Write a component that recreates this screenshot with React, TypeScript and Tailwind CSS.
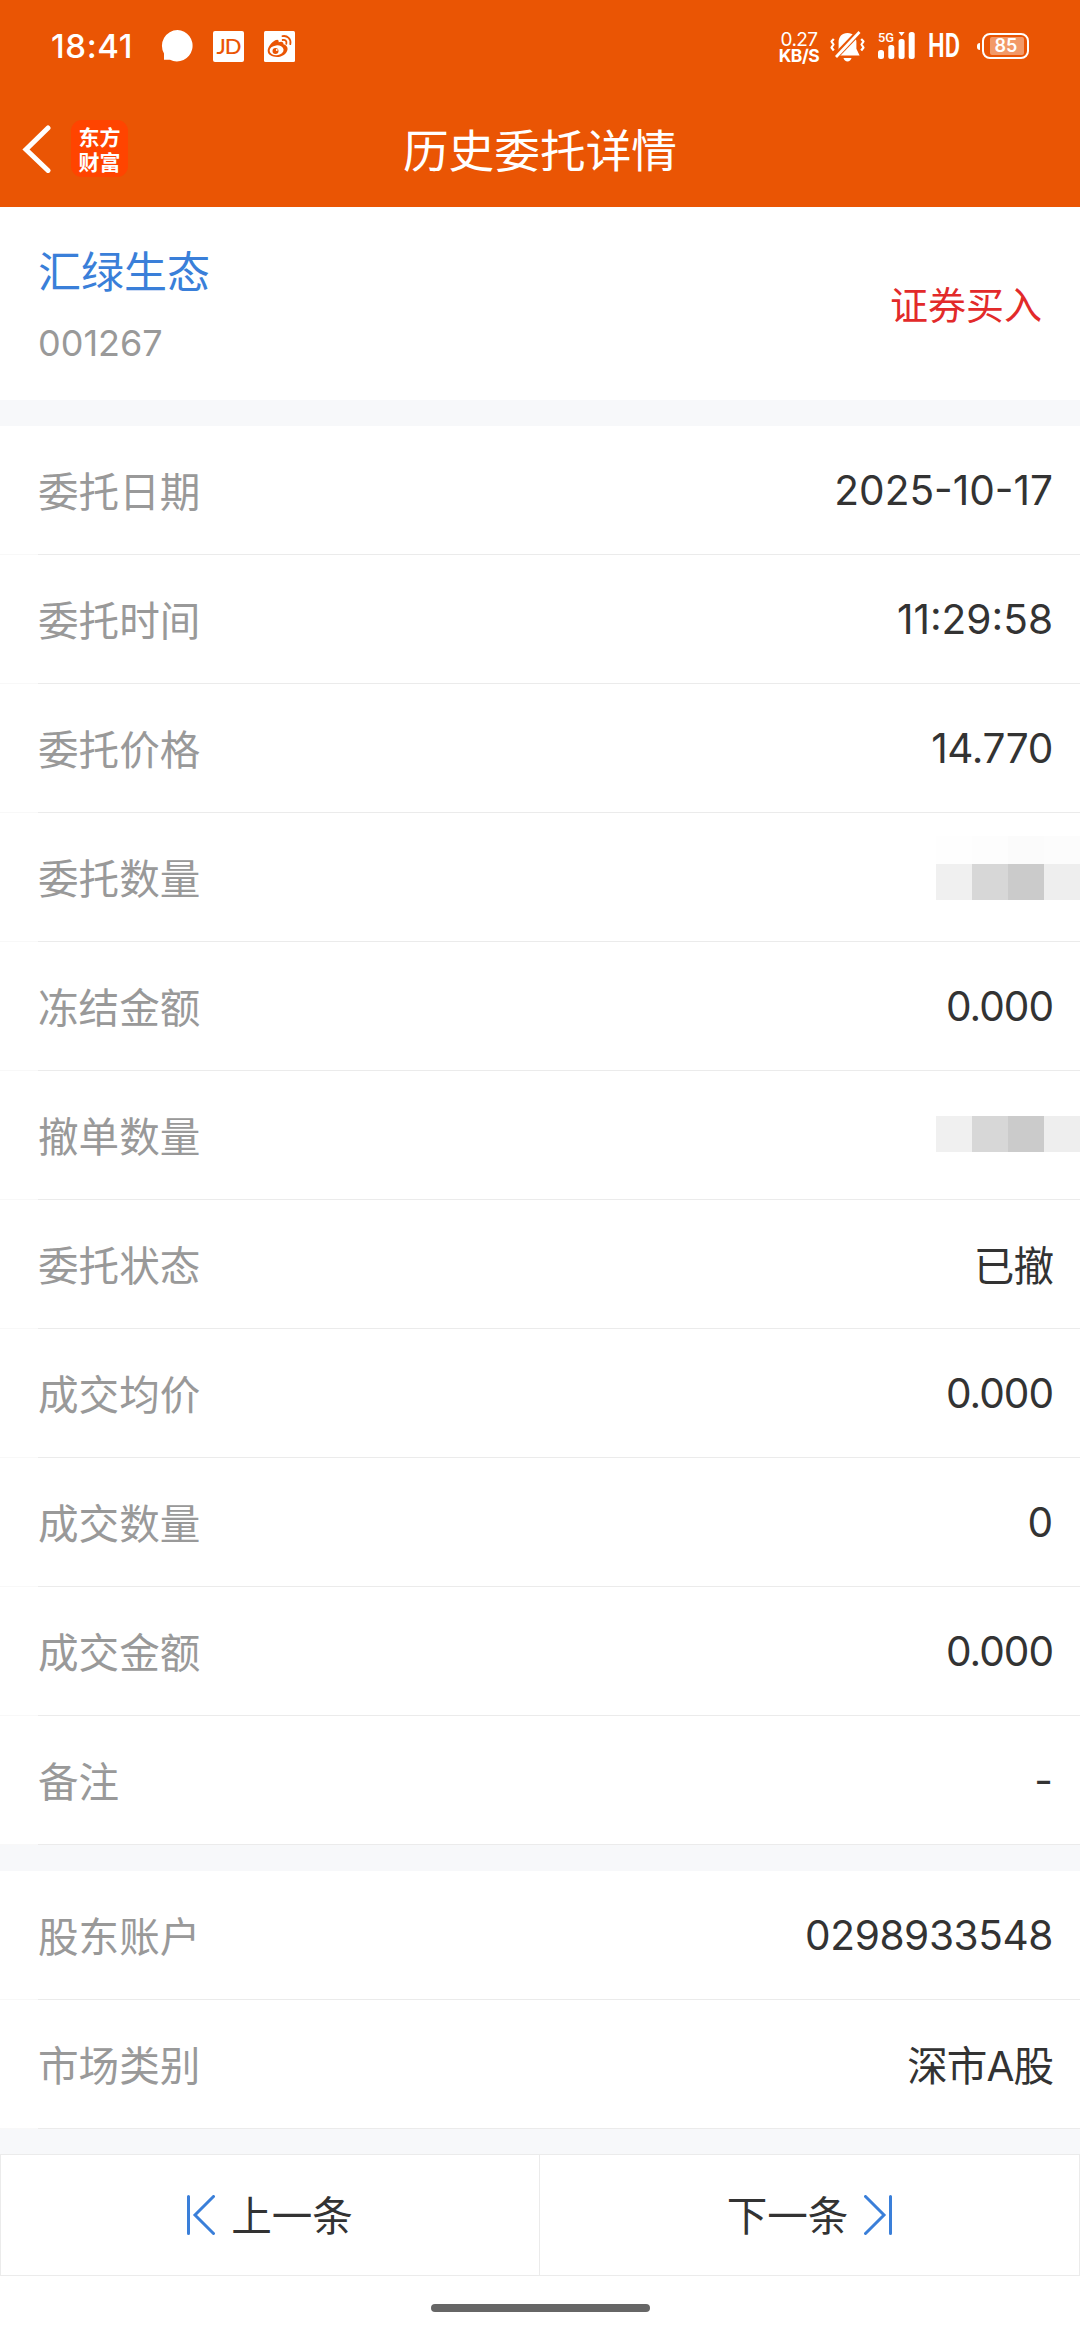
import React from "react";
import clsx from "clsx";

interface DetailRow {
  label: string;
  value?: string;
  valueClass?: string;
  masked?: "single" | "double";
}

const ORDER_ROWS: DetailRow[] = [
  { label: "委托日期", value: "2025-10-17" },
  { label: "委托时间", value: "11:29:58" },
  { label: "委托价格", value: "14.770", valueClass: "pt-[2px] tracking-[-0.4px]" },
  { label: "委托数量", masked: "double" },
  { label: "冻结金额", value: "0.000", valueClass: "pt-[2px] tracking-[-1px]" },
  { label: "撤单数量", masked: "single" },
  { label: "委托状态", value: "已撤", valueClass: "pt-[6px] tracking-[-1px]" },
  { label: "成交均价", value: "0.000", valueClass: "pt-[2px] tracking-[-1px]" },
  { label: "成交数量", value: "0" },
  { label: "成交金额", value: "0.000", valueClass: "pt-[2px] tracking-[-1px]" },
  { label: "备注", value: "-" },
];

const ACCOUNT_ROWS: DetailRow[] = [
  { label: "股东账户", value: "0298933548", valueClass: "pt-[2px] tracking-[-0.4px]" },
  { label: "市场类别", value: "深市A股", valueClass: "pt-[6px] tracking-[-1px]" },
];

const BellOffIcon = () => (
  <svg className="h-[31px] w-[35px]" viewBox="0 0 35 31" fill="none">
    <path d="M17.5 2c-5.6 0-8.9 3.9-8.9 9v6.8L5.4 24.6h24.2l-3.2-6.8V11c0-5.100-3.300-9-8.900-9z" fill="#fff" />
    <path d="M13.500 27h8c-.6 2.300-2 3.500-4 3.500s-3.400-1.200-4-3.500z" fill="#fff" />
    <path d="M4.500 26.500 28.500 1.500" stroke="#ea5504" strokeWidth="6" />
    <path d="M6 26 29.500 1" stroke="#fff" strokeWidth="2.800" />
    <path d="M3.800 8 1.500 10.500 3.500 13.500 1.500 16.500 3.800 19.500M31.200 8l2.300 2.500-2 3 2 3-2.300 3" stroke="#fff" strokeWidth="2.200" strokeLinejoin="round" />
  </svg>
);

const SignalIcon = () => (
  <svg className="h-[30px] w-[38px] overflow-visible" viewBox="0 0 38 30" fill="#fff">
    <text x="0" y="11" fontFamily="Roboto, sans-serif" fontSize="13.500" fontWeight="500" textLength="16" lengthAdjust="spacingAndGlyphs">5G</text>
    <rect x="0" y="19" width="6" height="9" rx="2.500" />
    <rect x="10.300" y="14" width="6" height="14" rx="2.500" />
    <rect x="20.600" y="8" width="6" height="20" rx="2.500" />
    <path d="M20.500 1h6.200l-3.100 4z" />
    <rect x="30.700" y="1" width="6" height="27" rx="2.500" />
  </svg>
);

const WeiboIcon = () => (
  <svg className="h-[31px] w-[31px]" viewBox="0 0 31 31" fill="none">
    <rect width="31" height="31" rx="1.500" fill="#fff" />
    <path
      d="M11.200 9.200c2.300-1.200 4-.4 3.400 2 2.900-1.100 5.300-.4 4.800 2.100 2.600.8 4.700 2.600 4.100 5.400-1 4.200-5.400 7.300-10.400 7.300-5.200 0-9.400-2.200-9.400-6.200 0-3.600 3.700-8.600 7.500-10.600z"
      fill="#ea5504"
    />
    <ellipse cx="12.600" cy="19.300" rx="7" ry="4.900" fill="#fff" transform="rotate(-6 12.600 19.300)" />
    <circle cx="11.500" cy="19.900" r="3" fill="#ea5504" />
    <circle cx="12.800" cy="19" r="0.900" fill="#fff" />
    <path d="M18.500 5.200c4.800-1 9 3 7.800 8M18.700 9c2.600-.6 4.300 1.300 3.600 3.800" stroke="#ea5504" strokeWidth="1.800" strokeLinecap="round" />
  </svg>
);

const StatusBar = () => (
  <div className="flex h-[92px] items-center text-white">
    <span className="ml-[51px] w-[84px] text-[33px] font-medium leading-none tracking-[0.6px] whitespace-nowrap">18:41</span>
    <svg className="ml-[26px] h-[32px] w-[33px]" viewBox="0 0 33 32" fill="#fff">
      <path d="M16.500 0A15.700 15.700 0 1 1 9 29.800H3V23.500A15.700 15.700 0 0 1 16.500 0z" />
    </svg>
    <span className="ml-[19px] flex h-[31px] w-[31px] items-center justify-center rounded-[2px] bg-white font-['Lato'] text-[22px] font-medium leading-none tracking-[-1px] text-[#ea5504]">
      JD
    </span>
    <div className="ml-5">
      <WeiboIcon />
    </div>

    <div className="mr-[51px] ml-auto flex items-center">
      <div className="flex w-[42px] flex-col items-center pt-[3px] text-[19px] leading-[16px]">
        <span className="tracking-[-0.6px]">0.27</span>
        <span className="text-[17.500px] font-bold tracking-[-0.500px]">KB/S</span>
      </div>
      <div className="ml-[10px]">
        <BellOffIcon />
      </div>
      <div className="ml-[13px]">
        <SignalIcon />
      </div>
      <svg className="ml-[13px] h-[25px] w-[31px] overflow-visible" viewBox="0 0 31 25" fill="#fff">
        <text x="-1" y="23" fontFamily="Roboto, sans-serif" fontSize="32.500" fontWeight="600" textLength="32" lengthAdjust="spacingAndGlyphs">HD</text>
      </svg>
      <span className="ml-[17px] h-[7px] w-[3px] rounded-l-full bg-white" />
      <div className="mb-px ml-[2px] flex h-[26px] w-[47px] items-center justify-end rounded-[8px] border-2 border-white pr-[3px]">
        <span className="flex h-[18px] w-[34px] items-center justify-center rounded-[2px] bg-white/40 pr-[2px] text-[18px] font-semibold leading-none">85</span>
      </div>
    </div>
  </div>
);

const TitleBar = () => (
  <div className="grid h-[115px] grid-cols-[1fr_auto_1fr] items-center">
    <div className="flex items-center pb-[2px] pl-[22px]">
      <svg className="h-[48px] w-[29px]" viewBox="0 0 29 48" fill="none">
        <path d="M26 3 4 24.500l22 21" stroke="#fff" strokeWidth="5" strokeLinecap="round" />
      </svg>
      <div className="ml-5 flex h-[57px] w-[57px] flex-col items-center justify-center rounded-[11px] bg-[#ff4400] font-['Noto_Sans_CJK_SC'] text-[21px] font-bold leading-[25px] text-white">
        <span>东方</span>
        <span>财富</span>
      </div>
    </div>
    <h1 className="pt-[5px] text-[45.700px] font-normal leading-none text-white">历史委托详情</h1>
  </div>
);

// Pixelated block that hides a sensitive quantity
const MaskedValue: React.FC<{ double?: boolean }> = ({ double = false }) => (
  <div className={clsx("w-36", double ? "pb-[18px]" : "pb-[2px]")}>
    {double && (
      <div className="grid h-[28px] grid-cols-4">
        <span className="bg-[#fefefe]" />
        <span className="bg-[#fdfdfd]" />
        <span className="bg-[#fbfbfb]" />
        <span className="bg-[#fcfcfc]" />
      </div>
    )}
    <div className="grid h-9 grid-cols-4">
      <span className="bg-[#f0f0f0]" />
      <span className="bg-[#d7d7d7]" />
      <span className="bg-[#cbcbcb]" />
      <span className="bg-[#eeeeee]" />
    </div>
  </div>
);

const Row: React.FC<{ row: DetailRow }> = ({ row }) => (
  <div className="flex h-[129px]">
    <span className="w-[38px] border-b border-[#f8f8f8]" />
    <div className="flex flex-1 items-center justify-between border-b border-[#ebebeb]">
      <span className="pt-[7px] text-[40.600px] leading-none text-[#999999]">{row.label}</span>
      {row.masked ? (
        <MaskedValue double={row.masked === "double"} />
      ) : (
        <span className={clsx("pr-[27px] text-[40.600px] leading-none text-[#333333]", row.valueClass ?? "pt-[2px]")}>
          {row.value}
        </span>
      )}
    </div>
  </div>
);

const StepIcon: React.FC<{ className?: string }> = ({ className }) => (
  <svg className={clsx("h-[40px] w-[28px]", className)} viewBox="0 0 28 40" fill="none" stroke="#3a7fd9" strokeWidth="3" strokeLinecap="round">
    <path d="M1.500 1.500v37M26.500 1.500 8 20l18.500 18.500" />
  </svg>
);

export default function App() {
  return (
    <div className="flex h-[2340px] w-[1080px] flex-col overflow-hidden bg-white font-[Inter,'Noto_Sans_CJK_SC',sans-serif]">
      <header className="bg-[#ea5504]">
        <StatusBar />
        <TitleBar />
      </header>

      {/* Stock summary */}
      <section className="flex h-[193px] items-center justify-between pr-[38px] pl-[38px]">
        <div className="flex flex-col gap-[31px] pt-[5px]">
          <span className="text-[43px] leading-none text-[#3a7fd9]">汇绿生态</span>
          <span className="text-[36px] leading-none text-[#999999]">001267</span>
        </div>
        <span className="pt-[2px] text-[38px] leading-none text-[#e22a2a]">证券买入</span>
      </section>

      <div className="h-[26px] bg-[#f7f8fa]" />
      <section>
        {ORDER_ROWS.map((row) => (
          <Row key={row.label} row={row} />
        ))}
      </section>

      <div className="h-[26px] bg-[#f7f8fa]" />
      <section>
        {ACCOUNT_ROWS.map((row) => (
          <Row key={row.label} row={row} />
        ))}
      </section>

      <div className="h-[25px] bg-[#f7f8fa]" />
      {/* Previous / next order */}
      <nav className="grid h-[122px] grid-cols-2 border border-[#ebebeb] text-[40.600px] leading-none text-[#333333]">
        <button className="flex items-center justify-center gap-4 border-r border-[#ebebeb]">
          <StepIcon />
          <span className="pt-[5px]">上一条</span>
        </button>
        <button className="flex items-center justify-center gap-4">
          <span className="pt-[5px]">下一条</span>
          <StepIcon className="rotate-180" />
        </button>
      </nav>

      <div className="mx-auto mt-7 h-2 w-[219px] rounded-full bg-[#666666]" />
    </div>
  );
}
